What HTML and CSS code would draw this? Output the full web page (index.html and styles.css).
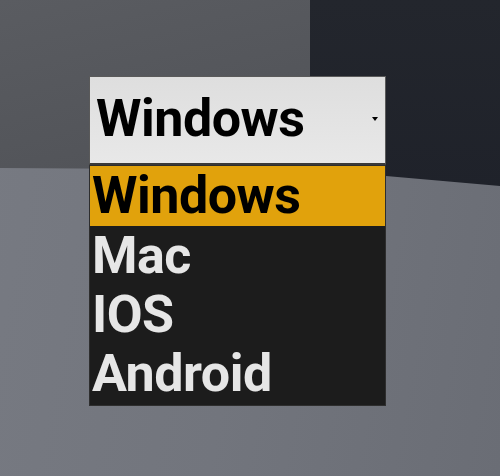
FILE: index.html
```html
<!DOCTYPE html>
<html lang="en">
<head>
    <meta charset="UTF-8">
    <meta name="viewport" content="width=device-width, initial-scale=1.0">
    <title>Platform</title>
    <link rel="stylesheet" href="styles.css">
</head>
<body>
    <div class="scene">
        <div class="dropdown">
            <div class="dropdown-current">
                <span>Windows</span>
                <span class="caret"></span>
            </div>
            <ul class="dropdown-list">
                <li class="selected">Windows</li>
                <li>Mac</li>
                <li>IOS</li>
                <li>Android</li>
            </ul>
        </div>
    </div>
</body>
</html>
```

FILE: styles.css
```css
* {
    box-sizing: border-box;
    margin: 0;
    padding: 0;
}

body {
    font-family: Roboto, "Liberation Sans", Arial, sans-serif;
    background-color: #4c4e54;
    overflow: hidden;
}

.scene {
    position: relative;
    width: 500px;
    height: 476px;
    padding: 76px 0 0 89px;
    background: linear-gradient(165deg, #5a5c61 0%, #505257 40%, #4a4c52 70%);
}

/* back wall on the right */
.scene::before {
    content: "";
    position: absolute;
    top: 0;
    left: 310px;
    width: 190px;
    height: 190px;
    background: linear-gradient(180deg, #23262d 0%, #1f222a 100%);
}

/* floor */
.scene::after {
    content: "";
    position: absolute;
    inset: 0;
    background: linear-gradient(100deg, #777a82 0%, #72757d 50%, #6a6d75 100%);
    clip-path: polygon(0 168px, 310px 170px, 386px 176px, 500px 186px, 500px 476px, 0 476px);
}

.dropdown {
    position: relative;
    z-index: 1;
    width: 297px;
}

.dropdown-current {
    display: flex;
    align-items: center;
    justify-content: space-between;
    height: 89px;
    padding: 0 7px 4px 6px;
    background: linear-gradient(180deg, #dedede 0%, #e8e8e8 100%);
    border: 1px solid #5a5a5a;
    border-bottom: 2px solid #3a3a3a;
    font-size: 52px;
    font-weight: bold;
    letter-spacing: -0.5px;
    color: #000;
}

.caret {
    width: 0;
    height: 0;
    border-left: 3px solid transparent;
    border-right: 3px solid transparent;
    border-top: 4px solid #000;
    margin-top: 2px;
}

.dropdown-list {
    list-style: none;
    background-color: #1c1c1c;
    border: 1px solid #2e2e2e;
    padding-bottom: 2px;
}

.dropdown-list li {
    height: 59px;
    line-height: 59px;
    padding-left: 2px;
    font-size: 52px;
    font-weight: bold;
    letter-spacing: -0.5px;
    color: #e6e6e6;
}

.dropdown-list li.selected {
    height: 60px;
    background-color: #e1a20c;
    color: #000;
}
```
